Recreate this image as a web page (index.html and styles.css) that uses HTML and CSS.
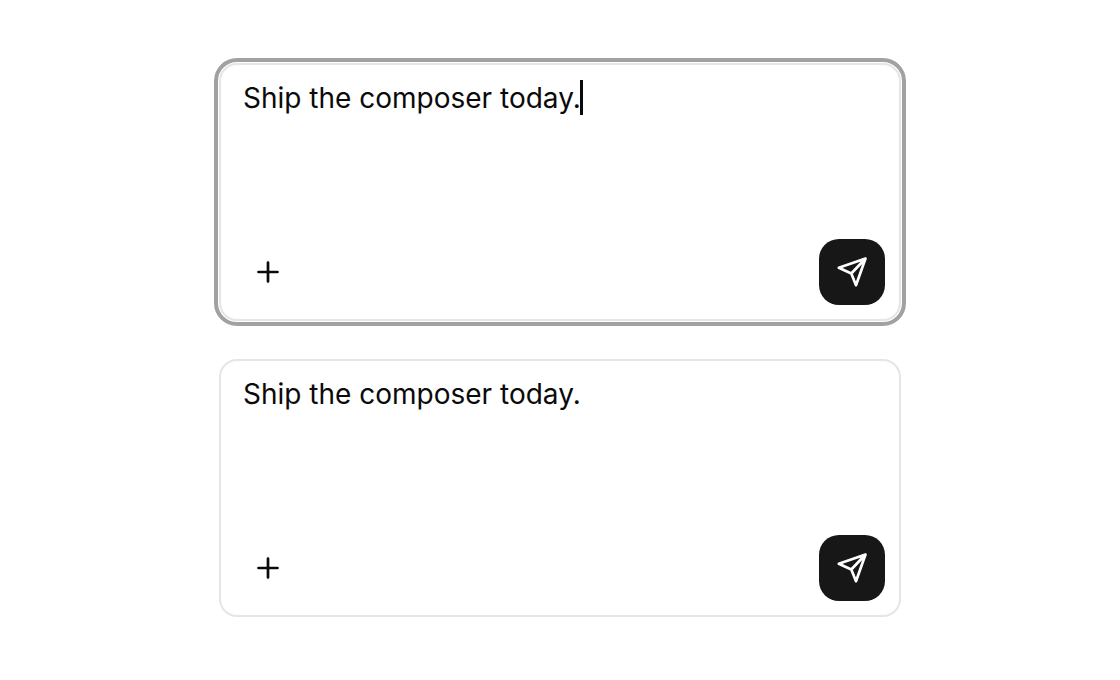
FILE: index.html
```
<!DOCTYPE html>
<html lang="en">
<head>
    <meta charset="UTF-8">
    <meta name="viewport" content="width=device-width, initial-scale=1.0">
    <title>Composer</title>
    <link rel="stylesheet" href="styles.css">
</head>
<body>
<main class="page">

    <form class="composer composer-focused">
        <div class="field">
            <textarea class="message" name="message" aria-label="Message">Ship the composer today.</textarea>
            <span class="caret"></span>
        </div>
        <div class="actions">
            <button type="button" class="btn btn-add" aria-label="Add attachment">
                <svg class="icon" viewBox="0 0 32 32"><path d="M16 6.5v19M6.5 16h19"/></svg>
            </button>
            <button type="submit" class="btn btn-send" aria-label="Send">
                <svg class="icon" viewBox="0 0 32 32"><path d="M29.5 2.5 2.8 11.8 15.3 17.5 20 29.2ZM29.5 2.5 15.3 17.5"/></svg>
            </button>
        </div>
    </form>

    <form class="composer">
        <div class="field">
            <textarea class="message" name="message" aria-label="Message">Ship the composer today.</textarea>
        </div>
        <div class="actions">
            <button type="button" class="btn btn-add" aria-label="Add attachment">
                <svg class="icon" viewBox="0 0 32 32"><path d="M16 6.5v19M6.5 16h19"/></svg>
            </button>
            <button type="submit" class="btn btn-send" aria-label="Send">
                <svg class="icon" viewBox="0 0 32 32"><path d="M29.5 2.5 2.8 11.8 15.3 17.5 20 29.2ZM29.5 2.5 15.3 17.5"/></svg>
            </button>
        </div>
    </form>

</main>
</body>
</html>
```
FILE: styles.css
```
* {
    box-sizing: border-box;
}

body {
    margin: 0;
    background: #fff;
    color: #0a0a0a;
    font-family: Inter, "Liberation Sans", sans-serif;
}

.page {
    min-height: 100vh;
    padding: 24px;
    display: flex;
    flex-direction: column;
    align-items: center;
    justify-content: center;
    gap: 38px;
}

.composer {
    width: 100%;
    max-width: 682px;
    border: 2px solid #e5e5e5;
    border-radius: 18px;
    background: #fff;
}

/* focus ring */
.composer-focused {
    outline: 4px solid #a1a1a1;
    outline-offset: 1px;
}

.field {
    position: relative;
    padding: 15px 22px 0;
}

.message {
    display: block;
    width: 100%;
    height: 159px;
    padding: 0;
    border: 0;
    outline: 0;
    resize: none;
    background: transparent;
    color: inherit;
    font-family: inherit;
    font-size: 28px;
    line-height: 37px;
}

.caret {
    position: absolute;
    top: 15px;
    left: 359px;
    width: 3px;
    height: 35px;
    background: #0a0a0a;
}

.actions {
    display: flex;
    align-items: center;
    justify-content: space-between;
    padding: 0 14px 14px;
}

.btn {
    display: flex;
    align-items: center;
    justify-content: center;
    width: 66px;
    height: 66px;
    padding: 0;
    border: 0;
    border-radius: 20px;
    background: transparent;
    color: #0a0a0a;
    cursor: pointer;
}

.btn-send {
    background: #171717;
    color: #fff;
}

.icon {
    width: 32px;
    height: 32px;
    fill: none;
    stroke: currentColor;
    stroke-width: 2.7;
    stroke-linecap: round;
    stroke-linejoin: round;
}
```
